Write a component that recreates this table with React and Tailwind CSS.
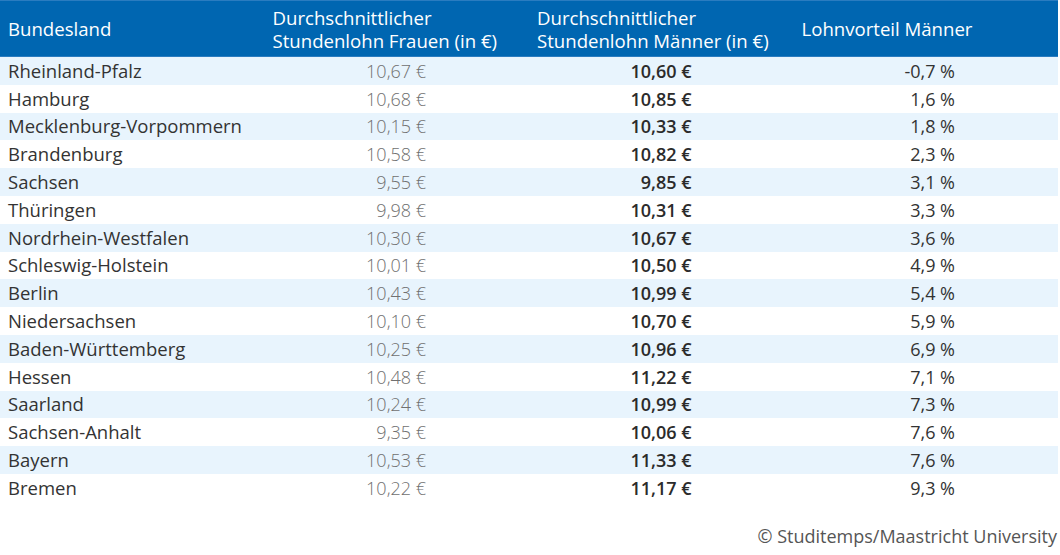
import React from "react";

const rows = [
  ["Rheinland-Pfalz", "10,67 €", "10,60 €", "-0,7 %"],
  ["Hamburg", "10,68 €", "10,85 €", "1,6 %"],
  ["Mecklenburg-Vorpommern", "10,15 €", "10,33 €", "1,8 %"],
  ["Brandenburg", "10,58 €", "10,82 €", "2,3 %"],
  ["Sachsen", "9,55 €", "9,85 €", "3,1 %"],
  ["Thüringen", "9,98 €", "10,31 €", "3,3 %"],
  ["Nordrhein-Westfalen", "10,30 €", "10,67 €", "3,6 %"],
  ["Schleswig-Holstein", "10,01 €", "10,50 €", "4,9 %"],
  ["Berlin", "10,43 €", "10,99 €", "5,4 %"],
  ["Niedersachsen", "10,10 €", "10,70 €", "5,9 %"],
  ["Baden-Württemberg", "10,25 €", "10,96 €", "6,9 %"],
  ["Hessen", "10,48 €", "11,22 €", "7,1 %"],
  ["Saarland", "10,24 €", "10,99 €", "7,3 %"],
  ["Sachsen-Anhalt", "9,35 €", "10,06 €", "7,6 %"],
  ["Bayern", "10,53 €", "11,33 €", "7,6 %"],
  ["Bremen", "10,22 €", "11,17 €", "9,3 %"],
];

const App = () => {
  return (
    <div className="w-[1060px] h-[555px] bg-white font-['Open_Sans',sans-serif] text-[18px]">
      <div className="w-[1058px]">
        <div className="grid grid-cols-4 h-[57px] bg-[#0066b1] border-t border-b border-[#2a7cc0] text-white text-[18.6px] leading-[23px]">
          <div className="flex items-center pl-2">Bundesland</div>
          <div className="flex items-center pl-2">
            Durchschnittlicher
            <br />
            Stundenlohn Frauen (in €)
          </div>
          <div className="flex items-center pl-2">
            Durchschnittlicher
            <br />
            Stundenlohn Männer (in €)
          </div>
          <div className="flex items-center pl-2">Lohnvorteil Männer</div>
        </div>
        {rows.map((r, i) => (
          <div
            key={r[0]}
            className={`grid grid-cols-4 h-[27.8px] items-center leading-[24px] ${
              i % 2 === 0 ? "bg-[#e8f4fd]" : "bg-white"
            }`}
          >
            <div className="pl-2 text-[#333333] text-[18.5px]">{r[0]}</div>
            <div className="pr-[103px] text-right text-[#707070] font-light">
              {r[1]}
            </div>
            <div className="pr-[102px] text-right text-[#2b2b2b] font-semibold">
              {r[2]}
            </div>
            <div className="pr-[103px] text-right text-[#333333]">{r[3]}</div>
          </div>
        ))}
      </div>
      <div className="mt-[22px] pr-[3px] text-right text-[#555555] leading-[24px]">
        © Studitemps/Maastricht University
      </div>
    </div>
  );
};

export default App;
